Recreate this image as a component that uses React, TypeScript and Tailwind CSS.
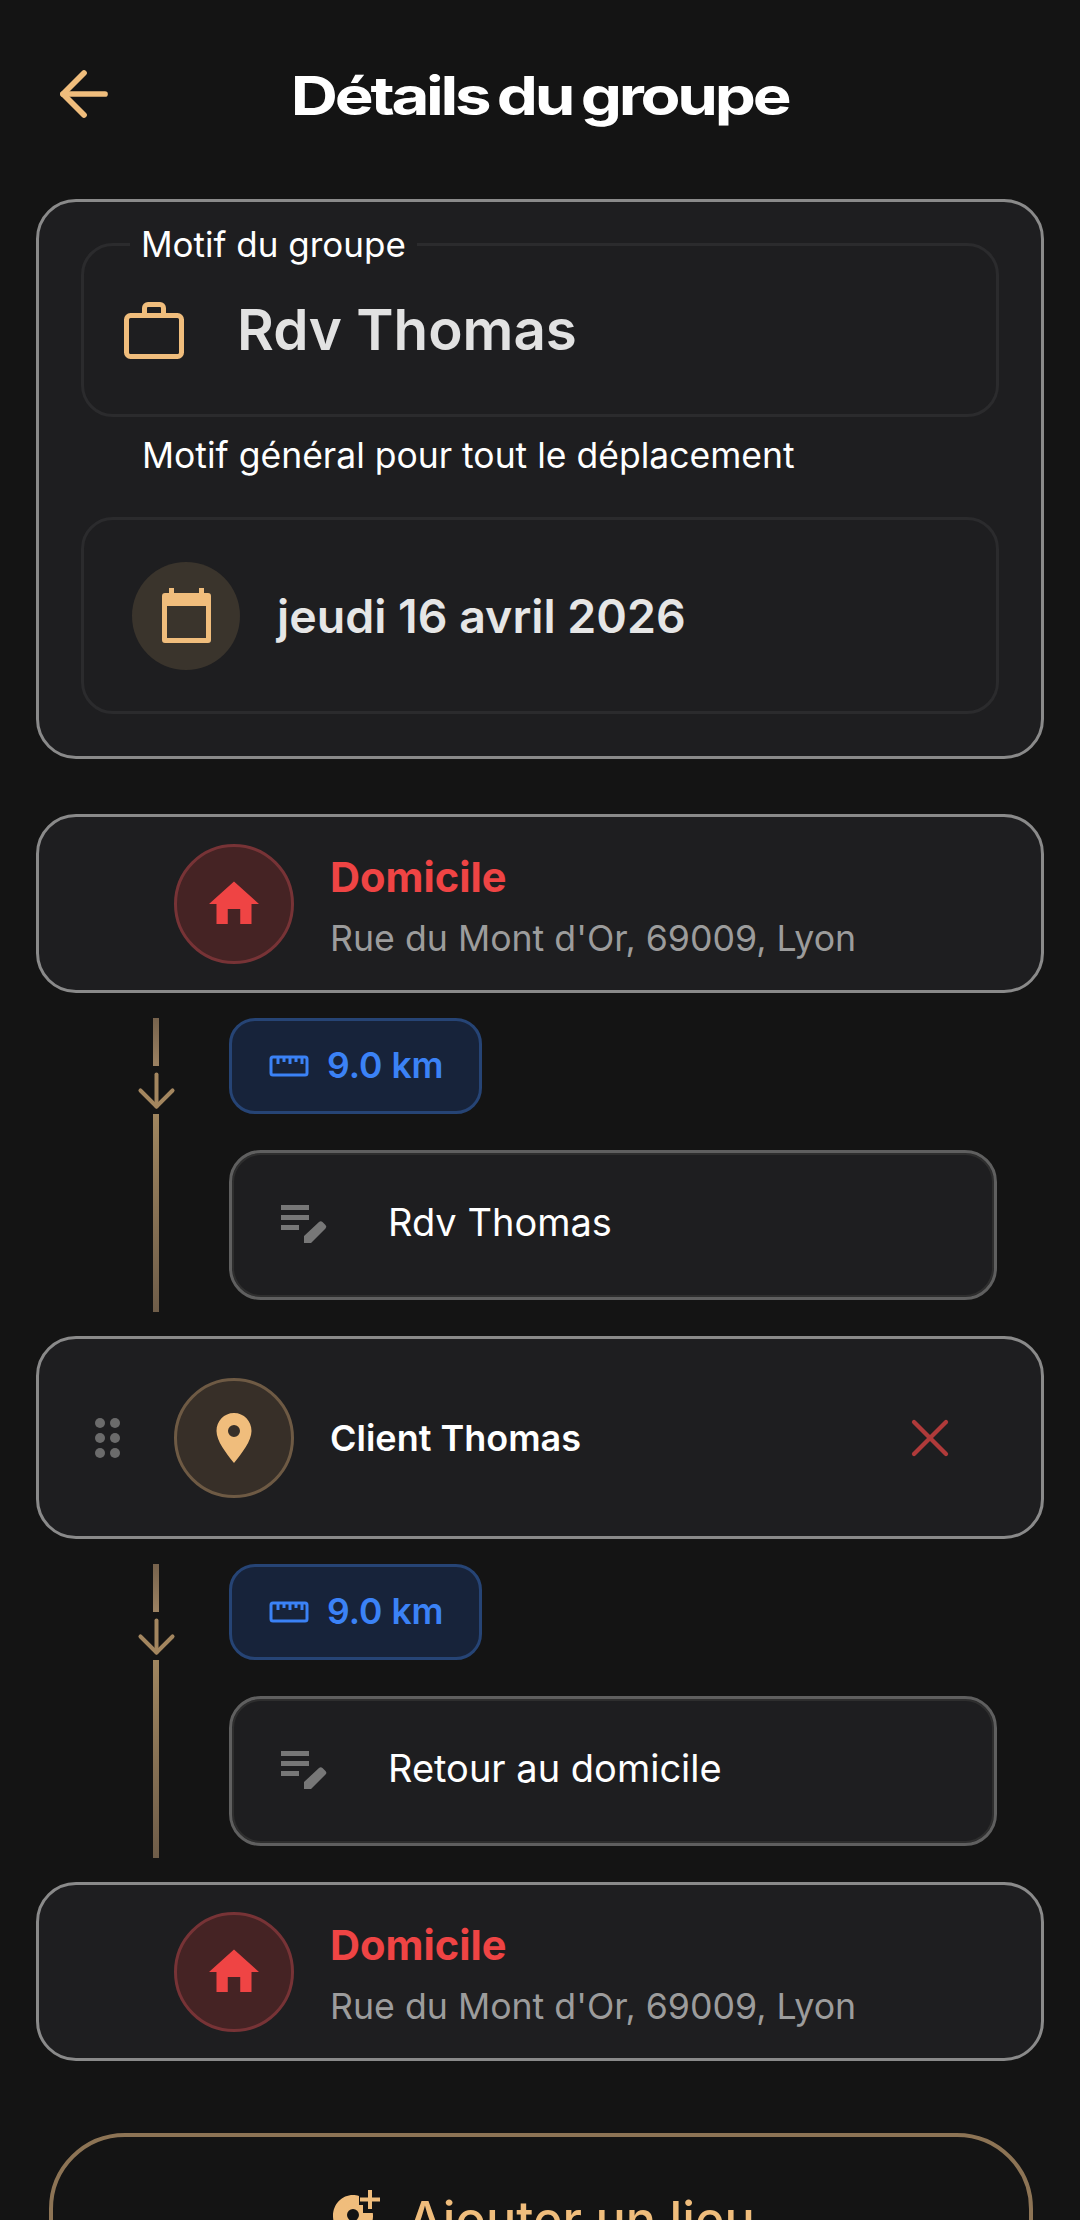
import { ArrowLeft, ArrowDown, X } from "lucide-react";

const Home = () => (
  <svg viewBox="0 0 24 24" className="w-[60px] h-[60px] fill-[#ef4444]">
    <path d="M9.5 20v-6h5v6H19v-8h3L12 3 2 12h3v8z" />
  </svg>
);

const Ruler = () => (
  <svg viewBox="0 0 40 24" className="w-[40px] h-[24px] fill-none stroke-[#3b82f6] stroke-[3]">
    <rect x="2" y="3" width="36" height="18" rx="2" />
    <path d="M9 3v7M15 3v5M21 3v7M27 3v5M33 3v7" />
  </svg>
);

const NoteEdit = () => (
  <svg viewBox="0 0 48 40" className="w-[48px] h-[40px] fill-[#777]">
    <path d="M0 0h28v5H0zM0 10h28v5H0zM0 20h18v5H0z" />
    <path d="M23 38v-7L38 17a2.5 2.5 0 0 1 3.5 0l3 3a2.5 2.5 0 0 1 0 3.5L30 38z" />
  </svg>
);

const Endpoint = () => (
  <div className="flex items-center h-[179px] rounded-[40px] border-[3px] border-[#8a8a8a] bg-[#1e1e20] pl-[135px]">
    <div className="flex items-center justify-center w-[120px] h-[120px] rounded-full bg-[#452324] border-[3px] border-[#773336]">
      <Home />
    </div>
    <div className="ml-[36px] pt-[4px] flex flex-col gap-[14px]">
      <p className="text-[41.6px] leading-[50px] font-bold text-[#ef4444]">Domicile</p>
      <p className="text-[35.7px] leading-[44px] text-[#9c9c9c]">Rue du Mont d'Or, 69009, Lyon</p>
    </div>
  </div>
);

const Connector = ({ label }: { label: string }) => (
  <div className="flex h-[343px] pt-[25px]">
    <div className="w-[193px] pl-[100px] shrink-0">
      <div className="w-[40px] flex flex-col items-center">
        <div className="w-[6px] h-[48px] bg-gradient-to-b from-[#76624c] to-[#9c8262]" />
        <ArrowDown className="w-[55px] h-[55px] shrink-0 -my-[3.5px] text-[#a3865f]" strokeWidth={1.75} />
        <div className="w-[6px] h-[198px] bg-gradient-to-b from-[#a0865f] to-[#6f5d49]" />
      </div>
    </div>
    <div className="flex flex-col gap-[36px]">
      <div className="flex items-center w-[253px] h-[96px] rounded-[26px] border-[3px] border-[#264475] bg-[#17233a] pl-[37px] gap-[18px]">
        <Ruler />
        <span className="text-[35.5px] font-semibold text-[#3b82f6]">9.0 km</span>
      </div>
      <div className="flex items-center w-[768px] h-[150px] rounded-[32px] border-[3px] border-[#5f5f5f] shadow-[inset_0_0_0_2px_#2e2e2e] bg-[#1e1e20] pl-[49px]">
        <NoteEdit />
        <span className="ml-[59px] mb-[5px] text-[38px] text-white">{label}</span>
      </div>
    </div>
  </div>
);

export default function App() {
  return (
    <div className="w-[1080px] h-[2220px] overflow-hidden bg-[#141414] font-['Inter',sans-serif] text-white">
      <header className="relative flex items-center justify-center h-[190px]">
        <ArrowLeft className="absolute left-[48px] top-[58px] w-[72px] h-[72px] text-[#f0bd7c]" strokeWidth={1.9} />
        <h1 className="text-[54px] font-bold tracking-[-0.05em] [word-spacing:-3px] scale-x-[1.21]">Détails du groupe</h1>
      </header>

      <div className="mx-[36px]">
        <section className="rounded-[40px] border-[3px] border-[#8a8a8a] bg-[#1e1e20] h-[560px] mt-[9px] px-[42px] pt-[41px]">
          <div className="relative flex items-center h-[174px] rounded-[32px] border-[3px] border-[#2b2b2d] pl-[40px]">
            <span className="absolute left-[46px] -top-[24px] bg-[#1e1e20] px-[11px] text-[35px] leading-[44px] text-white">
              Motif du groupe
            </span>
            <svg viewBox="0 0 60 57" className="w-[60px] h-[57px] fill-none stroke-[#f0bd7c] stroke-[5]">
              <rect x="2.5" y="13.5" width="55" height="41" rx="4" />
              <path d="M20.5 13V6a3.5 3.500 0 0 1 3.5-3.5h12a3.5 3.500 0 0 1 3.5 3.5v7" />
            </svg>
            <span className="ml-[53px] text-[56.500px] font-semibold text-[#e2e2e2]">Rdv Thomas</span>
          </div>
          <p className="mt-[17px] ml-[61px] text-[35.5px] leading-[44px] text-white">
            Motif général pour tout le déplacement
          </p>
          <div className="flex items-center h-[197px] mt-[39px] rounded-[32px] border-[3px] border-[#2b2b2d] pl-[48px]">
            <div className="flex items-center justify-center w-[108px] h-[108px] rounded-full bg-[#3a342c]">
              <svg viewBox="0 0 49 55" className="w-[49px] h-[55px] fill-[#f0bd7c]">
                <path fillRule="evenodd" d="M3 5h43a3 3 0 0 1 3 3v44a3 3 0 0 1-3 3H3a3 3 0 0 1-3-3V8a3 3 0 0 1 3-3zM5 18v32h39V18z" />
                <path d="M7 0h5v6H7zM37 0h5v6h-5z" />
              </svg>
            </div>
            <span className="ml-[37px] mt-[2px] text-[46.5px] font-semibold text-[#e6e6e6]">jeudi 16 avril 2026</span>
          </div>
        </section>

        <div className="mt-[55px]">
          <Endpoint />
          <Connector label="Rdv Thomas" />
          <div className="flex items-center h-[203px] rounded-[40px] border-[3px] border-[#8a8a8a] bg-[#1e1e20] pl-[56px] pr-[79px]">
            <div className="grid grid-cols-2 gap-[5px] w-[25px]">
              {[0, 1, 2, 3, 4, 5].map((i) => (
                <span key={i} className="w-[10px] h-[10px] rounded-full bg-[#6b6b6b]" />
              ))}
            </div>
            <div className="ml-[54px] flex items-center justify-center w-[120px] h-[120px] rounded-full bg-[#372f28] border-[3px] border-[#6e5a44]">
              <svg viewBox="0 0 36 50" className="w-[36px] h-[50px]">
                <path
                  className="fill-[#f0bd7c]"
                  fillRule="evenodd"
                  d="M18 0C8 0 .5 8 .5 18 .5 28 10 40 18 50c8-10 17.5-22 17.5-32C35.500 8 28 0 18 0zm0 12a6 6 0 1 1 0 12 6 6 0 0 1 0-12z"
                />
              </svg>
            </div>
            <span className="ml-[36px] text-[36px] font-semibold text-white flex-1">Client Thomas</span>
            <X className="w-[64px] h-[64px] text-[#b03a3a]" strokeWidth={1.6} />
          </div>
          <Connector label="Retour au domicile" />
          <Endpoint />
        </div>
      </div>

      <div className="ml-[49px] mr-[47px] mt-[72px] h-[200px] rounded-[76px] border-[4px] border-[#8d7455] flex items-start justify-center pt-[53px] pl-[6px] gap-[26px] text-[#f0bd7c]">
        <svg viewBox="0 0 48 60" className="w-[48px] h-[60px] shrink-0 fill-[#f0bd7c]">
          <path
            fillRule="evenodd"
            d="M20 5C9 5 0 14 0 26c0 12 10 24 20 34 10-10 20-22 20-34 0-1 0-2-.2-3H30v-8h-4V6c-2-1-4-1-6-1zm0 14a6 6 0 1 1 0 12 6 6 0 0 1 0-12z"
          />
          <path d="M35 0h4v7.500h8v4h-8V19h-4v-7.500h-8v-4h8z" />
        </svg>
        <span className="text-[50.4px] leading-[60px] font-medium">Ajouter un lieu</span>
      </div>
    </div>
  );
}
